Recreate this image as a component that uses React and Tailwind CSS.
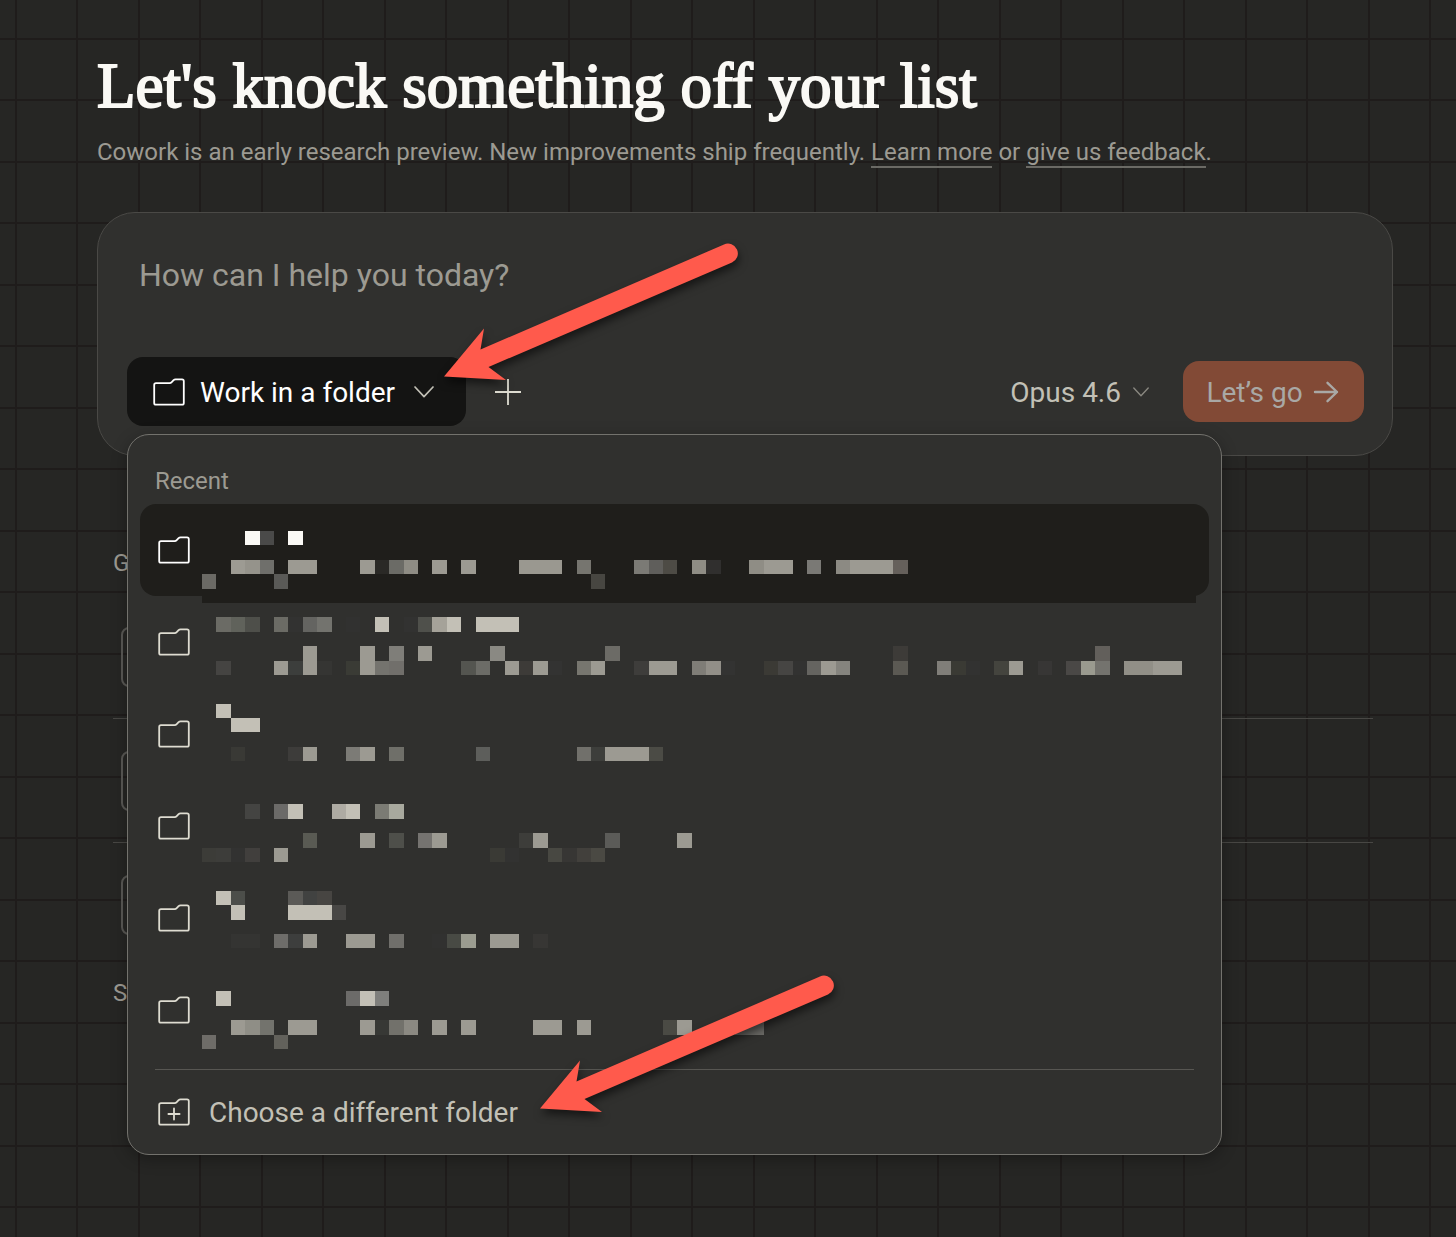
import { useState } from "react";

// [row, column, span, colour]
const MOSAIC = [
  [0, 3, 1, "#faf9f5"], [0, 4, 1, "#4a4a49"], [0, 6, 1, "#faf9f5"],
  [2, 2, 1, "#9d9b93"], [2, 3, 1, "#95938b"], [2, 4, 1, "#6f6f6b"], [2, 6, 2, "#9c9a92"],
  [2, 11, 1, "#9c9a92"], [2, 12, 1, "#2a2926"], [2, 13, 1, "#6b6b66"], [2, 14, 1, "#8e8c84"],
  [2, 16, 1, "#9c9a92"], [2, 18, 1, "#9c9a92"], [2, 22, 3, "#9a9890"], [2, 26, 1, "#76756f"],
  [2, 30, 1, "#7b7a75"], [2, 31, 1, "#5f5e5b"], [2, 32, 1, "#4d4b45"], [2, 34, 1, "#8f8d85"],
  [2, 35, 1, "#302f2e"], [2, 38, 1, "#8f8d85"], [2, 39, 2, "#9c9a92"], [2, 42, 1, "#7a7975"],
  [2, 44, 1, "#8c8a83"], [2, 45, 3, "#9c9a92"], [2, 48, 1, "#65605b"],
  [3, 0, 1, "#6b6a65"], [3, 5, 1, "#5a5a57"], [3, 27, 1, "#474641"],
  [4, 0, 69, "#1f1e1b"],
  [6, 1, 1, "#6b6b65"], [6, 2, 1, "#60625b"], [6, 3, 1, "#4e4f4a"], [6, 5, 1, "#6b6b65"],
  [6, 6, 1, "#323231"], [6, 7, 1, "#646461"], [6, 8, 1, "#73736e"], [6, 10, 1, "#313130"],
  [6, 12, 1, "#c3c0b6"], [6, 14, 1, "#323231"], [6, 15, 1, "#4f504b"], [6, 16, 1, "#a5a299"],
  [6, 17, 1, "#c3c0b6"], [6, 19, 3, "#c3c0b6"],
  [8, 7, 1, "#9c9a92"], [8, 11, 1, "#9c9a92"], [8, 13, 1, "#7f7e79"], [8, 15, 1, "#9c9a92"],
  [8, 20, 1, "#8a8983"], [8, 28, 1, "#6c6b66"], [8, 48, 1, "#3d3b38"], [8, 62, 1, "#625f5b"],
  [9, 1, 1, "#454442"], [9, 5, 1, "#9c9a92"], [9, 6, 1, "#3c3e3c"], [9, 7, 1, "#9c9a92"],
  [9, 8, 1, "#353533"], [9, 10, 1, "#3a3b35"], [9, 11, 1, "#9c9a92"], [9, 12, 1, "#74736e"],
  [9, 13, 1, "#716f6b"], [9, 18, 1, "#545550"], [9, 19, 1, "#6c6c67"], [9, 21, 1, "#9c9a92"],
  [9, 22, 1, "#3d3b38"], [9, 23, 1, "#9c9a92"], [9, 24, 1, "#333332"], [9, 26, 1, "#77766f"],
  [9, 27, 1, "#9c9a92"], [9, 30, 1, "#3e3d3b"], [9, 31, 2, "#9c9a92"], [9, 34, 1, "#7f7d77"],
  [9, 35, 1, "#928f88"], [9, 36, 1, "#333332"], [9, 39, 1, "#3b3a35"], [9, 40, 1, "#464543"],
  [9, 41, 1, "#323231"], [9, 42, 1, "#656460"], [9, 43, 1, "#9c9a92"], [9, 44, 1, "#85847e"],
  [9, 48, 1, "#5b5953"], [9, 51, 1, "#807e79"], [9, 52, 1, "#3a3a34"], [9, 53, 1, "#323231"],
  [9, 55, 1, "#44443e"], [9, 56, 1, "#9c9a92"], [9, 58, 1, "#373635"], [9, 60, 1, "#4a4846"],
  [9, 61, 1, "#9a9a8f"], [9, 62, 1, "#74736e"], [9, 64, 2, "#918f87"], [9, 66, 2, "#9c9a92"],
  [12, 1, 1, "#c3c0b6"], [13, 2, 2, "#c3c0b6"],
  [15, 2, 1, "#393935"], [15, 6, 1, "#3d3c3a"], [15, 7, 1, "#9c9a92"], [15, 10, 1, "#7c7b76"],
  [15, 11, 1, "#9c9a92"], [15, 13, 1, "#6f6f69"], [15, 19, 1, "#5d5e5b"], [15, 26, 1, "#71706b"],
  [15, 27, 1, "#3d3e3b"], [15, 28, 3, "#9c9a92"], [15, 31, 1, "#4b4b45"],
  [19, 3, 1, "#444442"], [19, 5, 1, "#6b6a68"], [19, 6, 1, "#c3c0b6"], [19, 9, 1, "#aeaba3"],
  [19, 10, 1, "#c3c0b6"], [19, 12, 1, "#7b7b74"], [19, 13, 1, "#a8a99e"],
  [21, 7, 1, "#595a53"], [21, 11, 1, "#9c9a92"], [21, 13, 1, "#4e4f4a"], [21, 15, 1, "#757370"],
  [21, 16, 1, "#9c9a92"], [21, 22, 1, "#3d3d3a"], [21, 23, 1, "#9c9a92"], [21, 28, 1, "#5b5b58"],
  [21, 33, 1, "#9c9a92"],
  [22, 0, 1, "#3c3c38"], [22, 1, 1, "#3d3d3a"], [22, 2, 1, "#323231"], [22, 3, 1, "#413f3d"],
  [22, 5, 1, "#9c9a92"], [22, 20, 1, "#3a3a35"], [22, 21, 1, "#323231"], [22, 24, 1, "#484842"],
  [22, 25, 1, "#373634"], [22, 26, 1, "#42403c"], [22, 27, 1, "#4a4943"],
  [25, 1, 1, "#c3c0b6"], [25, 2, 1, "#4c4e4a"], [25, 6, 1, "#5b5a57"], [25, 7, 1, "#414241"],
  [25, 8, 1, "#474542"],
  [26, 2, 1, "#c3c0b6"], [26, 6, 3, "#c3c0b6"], [26, 9, 1, "#484745"],
  [28, 2, 2, "#343432"], [28, 5, 1, "#6e6d6a"], [28, 6, 1, "#3d3e3d"], [28, 7, 1, "#9c9a92"],
  [28, 10, 2, "#9c9a92"], [28, 13, 1, "#706f6b"], [28, 16, 1, "#313130"], [28, 17, 1, "#484a44"],
  [28, 18, 1, "#9b9c90"], [28, 20, 2, "#9c9a92"], [28, 23, 1, "#373634"],
  [32, 1, 1, "#c3c0b6"], [32, 10, 1, "#6c6b69"], [32, 11, 1, "#c3c0b6"], [32, 12, 1, "#7f7f7c"],
  [34, 2, 1, "#9c9a92"], [34, 3, 1, "#8f8e86"], [34, 4, 1, "#73736d"], [34, 6, 2, "#9c9a92"],
  [34, 11, 1, "#9c9a92"], [34, 12, 1, "#373835"], [34, 13, 1, "#72716b"], [34, 14, 1, "#8b8982"],
  [34, 16, 1, "#9c9a92"], [34, 18, 1, "#9c9a92"], [34, 23, 2, "#9c9a92"], [34, 26, 1, "#9c9a92"],
  [34, 32, 1, "#4a4a44"], [34, 33, 1, "#9c9a92"], [34, 37, 2, "#6b6a66"],
  [35, 0, 1, "#6e6c68"], [35, 5, 1, "#62615b"],
];

const RECENT = [1, 2, 3, 4, 5, 6];

const FolderIcon = ({ plus = false }) => (
  <svg
    viewBox="0 0 32 28"
    className="h-7 w-8 shrink-0"
    fill="none"
    stroke="currentColor"
    strokeWidth="1.8"
    strokeLinejoin="round"
    strokeLinecap="round"
    aria-hidden="true"
  >
    <path d="M3 5.2H16.6Q17.8 5.2 18.7 4.2L20.6 2.2Q21.4 1.4 22.5 1.4H29Q30.8 1.4 30.8 3.2V24.9Q30.8 26.7 29 26.7H3Q1.2 26.7 1.2 24.9V7Q1.2 5.2 3 5.2Z" />
    {plus && <path d="M16 10.4V21.6M10.4 16H21.6" />}
  </svg>
);

const Chevron = ({ className }) => (
  <svg viewBox="0 0 20 12" className={className} fill="none" stroke="currentColor" aria-hidden="true">
    <path d="M1 1L10 10.6L19 1" strokeWidth="1.7" strokeLinecap="round" strokeLinejoin="round" />
  </svg>
);

const Arrow = ({ className }) => (
  <svg viewBox="0 0 310 160" className={className} aria-hidden="true">
    <path
      d="M8 140.500L48 92.500L44.500 113.500L288 8.500A9.800 9.800 0 0 1 296 26.500L52.500 131L70 144Z"
      fill="#ff5a4c"
    />
  </svg>
);

const Mosaic = () => (
  <svg
    viewBox="0 0 69 36"
    preserveAspectRatio="none"
    shapeRendering="crispEdges"
    className="pointer-events-none absolute left-[62px] top-[27px] h-[518px] w-[994px]"
    aria-hidden="true"
  >
    {MOSAIC.map(([row, col, span, fill]) => (
      <rect key={`${row}-${col}`} x={col} y={row} width={span} height="1" fill={fill} />
    ))}
  </svg>
);

const FolderMenu = () => (
  <div
    role="menu"
    className="absolute left-0 top-full z-10 mt-2 w-[1095px] rounded-[22px] border border-[#73726d] bg-[#30302e] px-3 pb-3 pt-7 shadow-[0_4px_16px_rgba(0,0,0,0.3)]"
  >
    <p className="px-[15px] text-2xl leading-9 text-[#9c9a92]">Recent</p>
    <div className="relative mt-[5px]">
      {RECENT.map((id) => (
        <button
          key={id}
          type="button"
          role="menuitem"
          aria-label={`Recent folder ${id}`}
          className="flex h-[92px] w-full items-center rounded-2xl px-[18px] text-[#dedcd1] first:bg-[#1f1e1b] first:text-white"
        >
          <FolderIcon />
        </button>
      ))}
      <Mosaic />
    </div>
    <hr className="mx-[15px] mt-[13px] border-[#575652]" />
    <button
      type="button"
      role="menuitem"
      className="mt-2 flex h-16 w-full items-center gap-[19px] px-[18px] pt-1 text-[28px] text-[#c2c0b6]"
    >
      <span className="text-[#dedcd1]">
        <FolderIcon plus />
      </span>
      <span className="pt-0.5">Choose a different folder</span>
    </button>
  </div>
);

const TaskRow = () => (
  <li className="flex h-[124px] items-center border-b border-[#484744] px-2 last:border-b-0">
    <span className="size-[60px] rounded-lg border-2 border-[#5a5955]" />
  </li>
);

const Composer = () => {
  const [text, setText] = useState("");

  return (
    <form
      className="relative rounded-[38px] border border-[#4a4946] bg-[#30302e] pb-[29px] pl-[29px] pr-7 pt-[38px]"
      onSubmit={(e) => e.preventDefault()}
    >
      <textarea
        rows={1}
        value={text}
        onChange={(e) => setText(e.target.value)}
        aria-label="How can I help you today?"
        placeholder="How can I help you today?"
        className="block h-12 w-full resize-none overflow-hidden bg-transparent px-3 text-[32px] leading-12 text-[#faf9f5] outline-none placeholder:text-[#9c9a92]"
      />
      <div className="relative mt-[58px] flex items-center">
        <button
          type="button"
          aria-haspopup="menu"
          aria-expanded="true"
          className="flex h-[69px] w-[339px] items-center rounded-2xl bg-[#141413] px-[26px] text-[28px] text-white"
        >
          <FolderIcon />
          <span className="ml-[15px] whitespace-nowrap pt-0.5">Work in a folder</span>
          <Chevron className="ml-auto mr-1.5 h-3 w-5 text-[#c2c0b6]" />
        </button>
        <button type="button" aria-label="Add" className="ml-7 text-[#dedcd1]">
          <svg viewBox="0 0 28 28" className="size-7" fill="none" stroke="currentColor" strokeWidth="1.8">
            <path d="M14 1V27M1 14H27" />
          </svg>
        </button>
        <button type="button" className="ml-auto flex items-center gap-3 text-[28px] text-[#c2c0b6]">
          <span className="pt-0.5">Opus 4.6</span>
          <Chevron className="h-2.5 w-4 text-[#8a8881]" />
        </button>
        <button
          type="submit"
          className="ml-[34px] flex h-[61px] w-[181px] items-center justify-center gap-2.5 rounded-2xl bg-[#824a36] pr-0.5 text-[28px] text-[#a9a8a5]"
        >
          <span className="pt-0.5">Let’s go</span>
          <svg
            viewBox="0 0 26 22"
            className="h-[22px] w-[26px]"
            fill="none"
            stroke="currentColor"
            strokeWidth="2.4"
            strokeLinecap="round"
            strokeLinejoin="round"
            aria-hidden="true"
          >
            <path d="M2 11H24M14.500 1.800L24 11L14.500 20.200" />
          </svg>
        </button>
        <FolderMenu />
      </div>
    </form>
  );
};

const App = () => {
  return (
    <main className="relative min-h-screen overflow-hidden bg-[#262624] bg-[linear-gradient(to_right,#1f1c1b_2px,transparent_2px,transparent_61px,#1f1c1b_61px,#1f1c1b_63px,transparent_63px),linear-gradient(to_bottom,#1f1c1b_2px,transparent_2px,transparent_61px,#1f1c1b_61px,#1f1c1b_63px,transparent_63px)] bg-[size:123px_123px] bg-[position:15px_38px] pl-[97px] pr-[63px] pt-12 font-['Roboto','Liberation_Sans',sans-serif]">
      <h1 className="font-['Liberation_Serif',serif] text-[63px] leading-[76px] text-[#faf9f5] [-webkit-text-stroke:2px_#faf9f5]">
        Let's knock something off your list
      </h1>
      <p className="mt-2 text-2xl leading-10 text-[#9c9a92]">
        Cowork is an early research preview. New improvements ship frequently.{" "}
        <a href="#learn" className="border-b-2 border-[#6b6a65]">
          Learn more
        </a>{" "}
        or{" "}
        <a href="#feedback" className="border-b-2 border-[#6b6a65]">
          give us feedback
        </a>
        .
      </p>
      <div className="mt-10">
        <Composer />
      </div>
      <section className="ml-4 mr-5 mt-[89px] text-2xl text-[#9c9a92]">
        <h2 className="leading-9">G</h2>
        <ul className="mt-3.5">
          <TaskRow />
          <TaskRow />
          <TaskRow />
        </ul>
        <h2 className="mt-2 leading-9">S</h2>
      </section>
      <Arrow className="pointer-events-none absolute left-[436px] top-[236px] z-20 h-40 w-[310px] drop-shadow-[1px_5px_4px_rgba(0,0,0,0.55)]" />
      <Arrow className="pointer-events-none absolute left-[532px] top-[968px] z-20 h-40 w-[310px] drop-shadow-[1px_5px_4px_rgba(0,0,0,0.55)]" />
    </main>
  );
};

export default App;
